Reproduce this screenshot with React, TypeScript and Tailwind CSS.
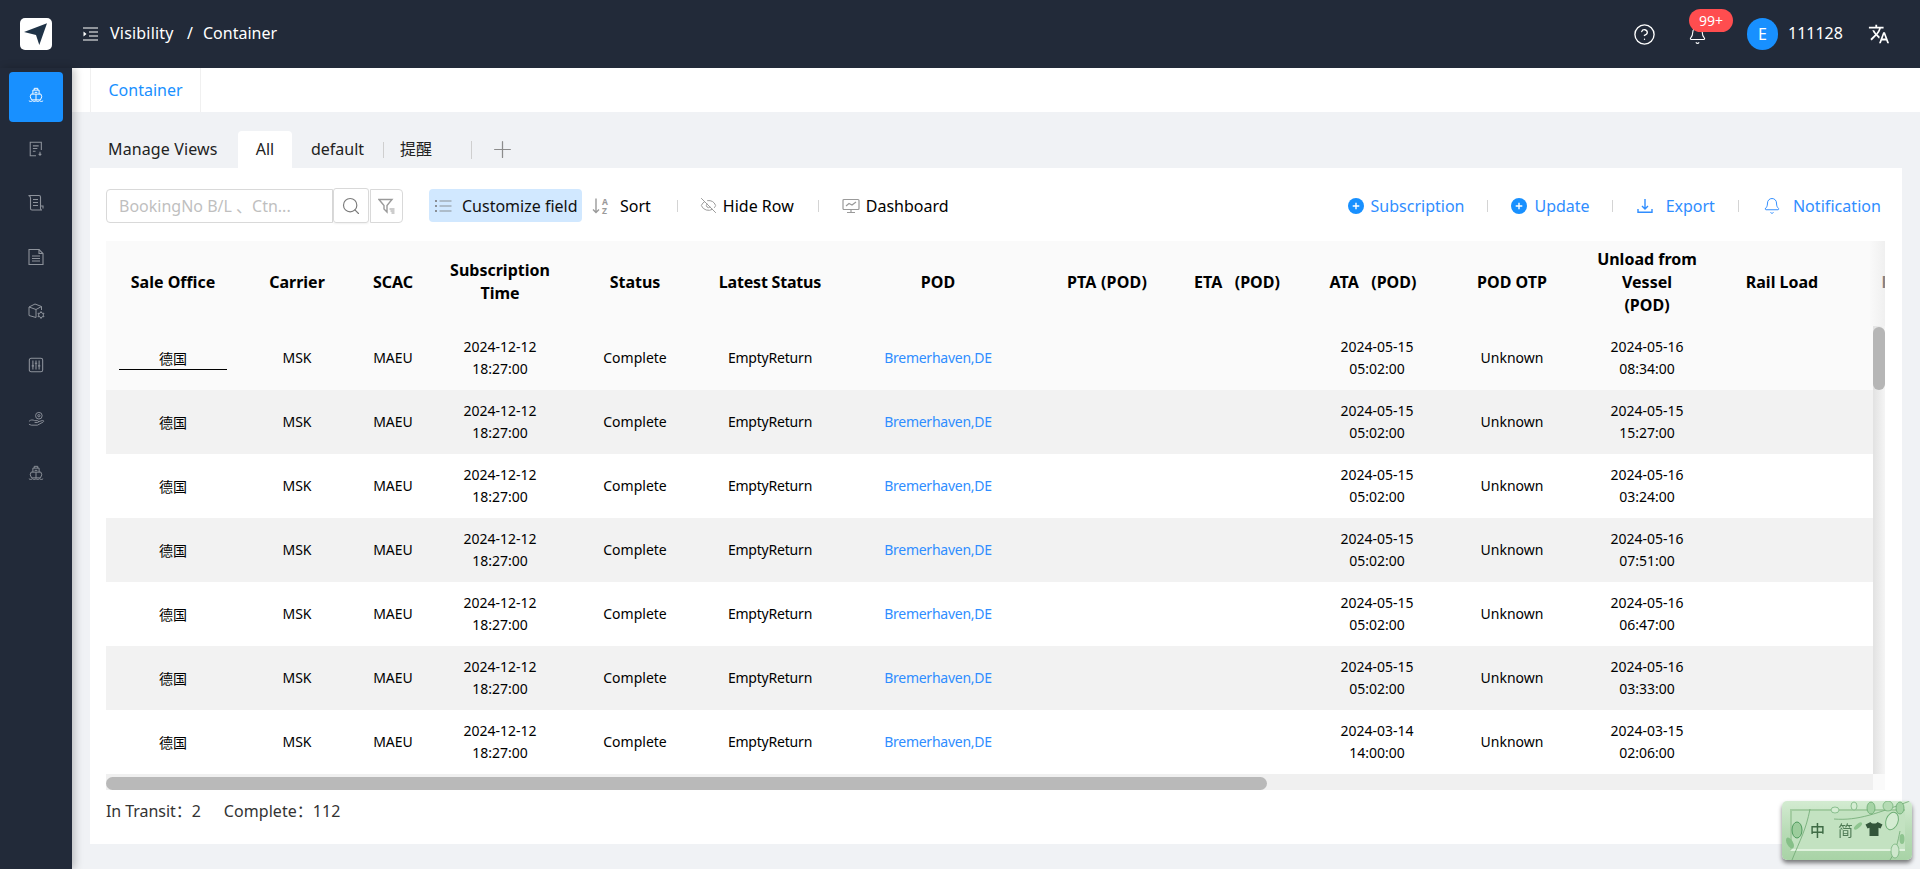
import { Bell, CircleHelp, EyeOff, Plus, Search } from "lucide-react";
import { MdTranslate } from "react-icons/md";
import type { ReactNode } from "react";

const columns = [
  { label: ["Sale Office"], w: "w-[134px]" },
  { label: ["Carrier"], w: "w-[114px]" },
  { label: ["SCAC"], w: "w-[78px]" },
  { label: ["Subscription", "Time"], w: "w-[136px]" },
  { label: ["Status"], w: "w-[134px]" },
  { label: ["Latest Status"], w: "w-[136px] tracking-[-0.2px]" },
  { label: ["POD"], w: "w-[200px]" },
  { label: ["PTA (POD)"], w: "w-[138px] tracking-[0.2px]" },
  { label: ["ETA\u00a0\u00a0 (POD)"], w: "w-[122px]" },
  { label: ["ATA\u00a0\u00a0 (POD)"], w: "w-[158px] pr-[8px]" },
  { label: ["POD OTP"], w: "w-[112px]" },
  { label: ["Unload from", "Vessel", "(POD)"], w: "w-[158px]" },
  { label: ["Rail Load"], w: "w-[112px]" },
  { label: ["Rail Unload"], w: "w-[178px]" },
];

const rows = [
  { ata: ["2024-05-15", "05:02:00"], unload: ["2024-05-16", "08:34:00"], bg: "bg-[#fafafa]" },
  { ata: ["2024-05-15", "05:02:00"], unload: ["2024-05-15", "15:27:00"], bg: "bg-[#f2f2f2]" },
  { ata: ["2024-05-15", "05:02:00"], unload: ["2024-05-16", "03:24:00"], bg: "bg-white" },
  { ata: ["2024-05-15", "05:02:00"], unload: ["2024-05-16", "07:51:00"], bg: "bg-[#f2f2f2]" },
  { ata: ["2024-05-15", "05:02:00"], unload: ["2024-05-16", "06:47:00"], bg: "bg-white" },
  { ata: ["2024-05-15", "05:02:00"], unload: ["2024-05-16", "03:33:00"], bg: "bg-[#f2f2f2]" },
  { ata: ["2024-03-14", "14:00:00"], unload: ["2024-03-15", "02:06:00"], bg: "bg-white" },
];

function Ship({ className }: { className?: string }) {
  return (
    <svg viewBox="0 0 18 18" fill="none" stroke="currentColor" strokeWidth="1.1" className={className}>
      <path d="M7 3.5V1.5h4v2" />
      <path d="M5.5 8V3.5h7V8" />
      <path d="M7.5 6h3" />
      <path d="M2.5 11l1-3h11l1 3-1.5 3.5h-10z" />
      <path d="M9 8v6.5" />
      <path d="M1 15.5c1.3 1 2.7 1 4 0 1.3 1 2.7 1 4 0 1.3 1 2.7 1 4 0 1.3 1 2.7 1 4 0" />
    </svg>
  );
}

function SideIcon({ index }: { index: number }) {
  const cls = "w-[16px] h-[16px]";
  const common = { viewBox: "0 0 18 18", fill: "none", stroke: "currentColor", strokeWidth: 1.2, className: cls };
  if (index === 1)
    return (
      <svg {...common}>
        <path d="M9 16.500H2.500V1.500H15V10" />
        <path d="M5.500 5.500h6.500M5.500 8.500h5M5.500 11.500h3" />
        <path d="M13.500 12v3.500M12 14.500l1.500 1.500 1.500-1.500" />
      </svg>
    );
  if (index === 2)
    return (
      <svg viewBox="0 0 18 18" fill="none" stroke="currentColor" strokeWidth="1.1" className="w-[18px] h-[18px]">
        <path d="M1.500 1.500h10.500a1.500 1.500 0 0 1 1.500 1.500v11.500a1.500 1.500 0 0 0 1.500 1.500H5a1.500 1.500 0 0 1-1.500-1.500V4A2.500 2.500 0 0 0 1.500 1.500z" />
        <path d="M6 5.500h5M6 8.500h5M6 11.500h5" />
        <path d="M13.500 12h2.500v2.500" />
      </svg>
    );
  if (index === 3)
    return (
      <svg viewBox="0 0 18 18" fill="none" stroke="currentColor" strokeWidth="1.1" className="w-[18px] h-[18px]">
        <path d="M2 1.500h10l4 4v11H2z" />
        <path d="M12 1.500v4h4" />
        <path d="M5 8h8M5 10.500h8M5 13h8" />
      </svg>
    );
  if (index === 4)
    return (
      <svg viewBox="0 0 18 18" fill="none" stroke="currentColor" strokeWidth="1" className="w-[18px] h-[18px]">
        <path d="M9 15.500l-7-2V5l6-3 6.500 2.500V8" />
        <path d="M2 5l7 2.500 5.500-3M9 7.500v8" />
        <path d="M14 9.500l1 1.800h2l-1 1.700 1 1.700h-2l-1 1.800-1-1.800h-2l1-1.700-1-1.700h2z" />
      </svg>
    );
  if (index === 5)
    return (
      <svg {...common}>
        <rect x="1.500" y="1.500" width="15" height="15" rx="2" />
        <path d="M5.500 4v10M9 4v10M12.500 4v10" />
        <path d="M4.200 10h2.600M7.700 7h2.600M11.200 10h2.600" />
      </svg>
    );
  if (index === 6)
    return (
      <svg viewBox="0 0 18 18" fill="none" stroke="currentColor" strokeWidth="1" className="w-[17px] h-[17px]">
        <circle cx="11.500" cy="5" r="3.500" />
        <circle cx="11.500" cy="5" r="1.200" />
        <path d="M1 11c2-2 4-1.800 6-.8h3c1.500 0 1.500 2 0 2H7" />
        <path d="M10.500 11.500l5-1.500c1.200-.2 1.500 1 .6 1.600L10 15H3.500L1 14" />
      </svg>
    );
  return <Ship className={cls} />;
}

function Plain({ children }: { children: ReactNode }) {
  return (
    <svg viewBox="0 0 18 18" fill="none" stroke="currentColor" strokeWidth="1.200" className="w-[18px] h-[18px]">
      {children}
    </svg>
  );
}

function PlusDot() {
  return (
    <svg viewBox="0 0 16 16" className="w-4 h-4">
      <circle cx="8" cy="8" r="8" fill="#1890ff" />
      <path d="M8 4.700v6.600M4.700 8h6.600" stroke="#fff" strokeWidth="1.400" />
    </svg>
  );
}

function Sep({ className }: { className: string }) {
  return <span className={"w-px h-[12px] bg-[#d4d4d4] " + className} />;
}

function Widget() {
  return (
    <div className="fixed left-[1782px] top-[801px] w-[130px] h-[59px] rounded-[5px] bg-gradient-to-b from-[#d3ebd1] via-[#b9dcb7] to-[#a8d3a6] shadow-[0_3px_4px_rgba(0,0,0,0.5)] overflow-hidden">
      <div className="absolute left-[8px] top-[8px] right-[7px] bottom-[9px] bg-[#c3e2c1] border-t-2 border-l-2 border-t-[#a3cca1] border-l-[#a3cca1] border-b-2 border-b-[#e0f2de]" />
      <svg viewBox="0 0 130 59" fill="none" className="absolute left-0 top-0 w-[130px] h-[59px]">
        <path d="M10 59c8-20 14-30 18-51M52 18c24 2 44-6 76-18M118 30c-2 10-4 20-10 29" stroke="#6ea872" strokeWidth="0.8" />
        <ellipse cx="15" cy="29" rx="5" ry="8" fill="#9ccd9c" stroke="#4f9b5e" />
        <ellipse cx="110" cy="20" rx="6" ry="9" transform="rotate(20 110 20)" fill="#d4ecd2" stroke="#6fae76" />
        <ellipse cx="89" cy="7" rx="4" ry="6" fill="#a5d3a5" stroke="#5ea467" strokeWidth="0.7" />
        <ellipse cx="106" cy="5" rx="5" ry="5" fill="#b5dbb4" stroke="#6fae76" strokeWidth="0.7" />
        <ellipse cx="118" cy="7" rx="4" ry="6" fill="#a5d3a5" stroke="#5ea467" strokeWidth="0.7" />
        <ellipse cx="72" cy="5" rx="3" ry="4" fill="#d4ecd2" stroke="#6fae76" strokeWidth="0.7" />
        <ellipse cx="53" cy="9" rx="4" ry="3" fill="#d4ecd2" stroke="#6fae76" strokeWidth="0.7" />
        <ellipse cx="76" cy="25" rx="2" ry="5" transform="rotate(50 76 25)" fill="#8ec48f" />
        <ellipse cx="8" cy="42" rx="3" ry="6" transform="rotate(-30 8 42)" fill="#86c088" />
        <ellipse cx="113" cy="50" rx="4" ry="7" fill="#cfe8cd" stroke="#6fae76" strokeWidth="0.7" />
        <ellipse cx="120" cy="38" rx="2.500" ry="5" fill="#8ec48f" />
      </svg>
      <div className="relative h-full flex items-center pb-[3px]">
        <span className="ml-[28px] text-[15px] leading-none text-[#3f6b45] font-['Noto_Sans_CJK_SC',sans-serif] font-medium">中</span>
        <span className="ml-[13px] text-[15px] leading-none text-[#4f7a55] font-['Noto_Sans_CJK_SC',sans-serif]">简</span>
        <svg viewBox="0 0 18 16" className="ml-[12px] w-[18px] h-4" fill="#33553a">
          <path d="M5.500 1L0.500 3.500l2 4 2-.8V15h9V6.700l2 .8 2-4L12.500 1c-1 2-6 2-7 0z" />
        </svg>
      </div>
    </div>
  );
}

export default function App() {
  return (
    <div className="h-screen w-full overflow-hidden flex flex-col bg-[#f0f2f5] font-['Noto_Sans','Noto_Sans_CJK_SC',sans-serif] text-black">
      {/* top bar */}
      <header className="h-[68px] shrink-0 bg-[#222a39] text-white flex items-center text-[16px]">
        <div className="ml-[20px] w-[32px] h-[32px] bg-white rounded-[5px] flex items-center justify-center">
          <svg viewBox="0 0 32 32" className="w-[32px] h-[32px]">
            <path d="M27 5.300L4 14l12 3 3.300 10z" fill="#1f3347" />
          </svg>
        </div>
        <svg viewBox="0 0 15 14" className="ml-[31px] w-[15px] h-[14px]" fill="none" stroke="#fff" strokeWidth="1.200">
          <path d="M0 1h15M6 5h9M6 9h9M0 13h15" />
          <path d="M0.500 4.500l3 2.500-3 2.500z" fill="#fff" stroke="none" />
        </svg>
        <span className="ml-[12px] pb-[2px] w-[64px] tracking-[0.2px] whitespace-nowrap">Visibility</span>
        <span className="ml-[13px] pb-[2px]">/</span>
        <span className="ml-[10px] pb-[2px]">Container</span>
        <div className="flex-1" />
        <CircleHelp className="w-[23px] h-[23px] -mr-[2px]" strokeWidth={1.4} />
        <div className="relative ml-[37px] w-[13px] h-[18px] mt-[2px]">
          <Bell className="absolute left-[-3px] top-[-1px] w-[19px] h-[21px]" strokeWidth={1.4} />
          <span className="absolute left-[-2px] top-[-17px] w-[44px] h-[23px] rounded-full bg-[#ff4d4f] text-[14px] leading-[23px] text-center">99+</span>
        </div>
        <div className="ml-[43px] w-[31px] h-[32px] rounded-full bg-[#1890ff] flex items-center justify-center text-[16px]">E</div>
        <span className="ml-[10px] w-[55px] pb-[2px]">111128</span>
        <MdTranslate className="ml-[25px] w-[22px] h-[22px] mr-[30px]" />
      </header>

      <div className="flex flex-1 min-h-0">
        {/* side nav */}
        <aside className="w-[72px] shrink-0 bg-[#222a39] pt-[4px] flex flex-col items-center gap-[4px] relative z-10 shadow-[3px_0_8px_rgba(0,0,0,0.22)]">
          <div className="w-[54px] h-[50px] rounded-[4px] bg-[#1890ff] text-white flex items-center justify-center pb-1">
            <Ship className="w-[16px] h-[16px]" />
          </div>
          {[1, 2, 3, 4, 5, 6, 7].map((i) => (
            <div key={i} className="w-[54px] h-[50px] text-[#8d929b] flex items-center justify-center pb-1">
              <SideIcon index={i} />
            </div>
          ))}
        </aside>

        <main className="flex-1 min-w-0 flex flex-col">
          <div className="h-[44px] shrink-0 bg-white pl-[18px]">
            <div className="w-[111px] h-full border-x border-[#f0f0f0] flex items-center justify-center text-[16px] text-[#1890ff]">Container</div>
          </div>

          {/* saved views */}
          <div className="h-[37px] mt-[19px] ml-[18px] flex items-center text-[16px] text-[#222]">
            <span className="ml-[18px] w-[110px] whitespace-nowrap pb-[2px] tracking-[0.12px]">Manage Views</span>
            <div className="ml-[20px] w-[54px] h-[37px] bg-white rounded-t-[4px] flex items-center justify-center pb-[2px]">All</div>
            <span className="ml-[19px] w-[52px] pb-[2px]">default</span>
            <span className="ml-[20px] w-px h-[16px] bg-[#cfcfcf]" />
            <span className="ml-[16px] w-[32px] whitespace-nowrap pb-[3px] font-['Noto_Sans_CJK_SC',sans-serif]">提醒</span>
            <span className="ml-[39px] w-px h-[18px] bg-[#cfcfcf]" />
            <Plus className="ml-[17px] w-[27px] h-[27px] text-[#8c8c8c]" strokeWidth={1.1} />
          </div>

          <section className="ml-[18px] mr-[18px] h-[676px] bg-white pl-[16px] pr-[17px] pt-[21px]">
            {/* toolbar */}
            <div className="h-[35px] pb-[2px] flex items-center text-[16px]">
              <div className="w-[227px] h-[34px] border border-[#d9d9d9] rounded-l-[4px] pl-[12px] flex items-center text-[#bfbfbf] text-[16px] whitespace-nowrap">BookingNo B/L 、Ctn...</div>
              <div className="w-[36px] h-[35px] border border-[#d9d9d9] rounded-[3px] flex items-center justify-center text-[#7b7b7b] shadow-[0_1px_2px_rgba(0,0,0,0.06)]">
                <Search className="w-[20px] h-[20px]" strokeWidth={1.4} />
              </div>
              <div className="ml-px w-[33px] h-[34px] border border-[#d9d9d9] rounded-r-[4px] flex items-center justify-center text-[#9a9a9a]">
                <svg viewBox="0 0 18 18" className="w-[18px] h-[18px]" fill="none" stroke="currentColor" strokeWidth="1.400">
                  <path d="M1 2.500h13l-5 6v6.500l-3-3V8.500z" />
                  <path d="M11.500 12h5M12.500 14h4M13.500 16h3" strokeWidth="1" />
                </svg>
              </div>
              <div className="ml-[26px] w-[153px] h-[33px] rounded-[4px] bg-[#d1e8ff] flex items-center pl-[5px] text-[#111]">
                <span className="text-[#8a8f96]">
                  <Plain>
                    <path d="M5.500 4h12M5.500 9h12M5.500 14h12" />
                    <path d="M1 4h2M1 9h2M1 14h2" strokeWidth="2" />
                  </Plain>
                </span>
                <span className="ml-[10px] whitespace-nowrap">Customize field</span>
              </div>
              <span className="ml-[10px] text-[#9a9a9a] w-[17px]">
                <svg viewBox="0 0 17 18" className="w-[17px] h-[18px]" fill="none" stroke="currentColor" strokeWidth="1.400">
                  <path d="M4 1.500v14M1 12.500l3 3 3-3" />
                  <text x="10" y="7.500" fontSize="8.500" fontWeight="700" fill="currentColor" stroke="none">A</text>
                  <text x="10" y="16.500" fontSize="8.500" fontWeight="700" fill="currentColor" stroke="none">Z</text>
                </svg>
              </span>
              <span className="ml-[11px]">Sort</span>
              <Sep className="ml-[26px]" />
              <EyeOff className="ml-[22px] w-[17px] h-[17px] text-[#9a9a9a]" strokeWidth={1.4} />
              <span className="ml-[6px] whitespace-nowrap">Hide Row</span>
              <Sep className="ml-[24px]" />
              <span className="ml-[23px] text-[#9a9a9a]">
                <Plain>
                  <rect x="1" y="2.500" width="16" height="10" rx="1" />
                  <path d="M9 12.500v3M5 15.500h8M4 9l3-2.500 3 1.500 4-3" />
                </Plain>
              </span>
              <span className="ml-[6px]">Dashboard</span>

              <div className="flex-1" />
              <div className="flex items-center text-[#2f8dff] pr-[4px]">
                <PlusDot />
                <span className="ml-[7px]">Subscription</span>
                <Sep className="ml-[23px]" />
                <span className="ml-[23px]"><PlusDot /></span>
                <span className="ml-[7px]">Update</span>
                <Sep className="ml-[22px]" />
                <span className="ml-[24px]">
                  <svg viewBox="0 0 16 16" className="w-4 h-4" fill="none" stroke="currentColor" strokeWidth="1.400">
                    <path d="M8 1v9.500M5 8l3 3 3-3M1 11v3.300h14V11" />
                  </svg>
                </span>
                <span className="ml-[13px]">Export</span>
                <Sep className="ml-[23px]" />
                <Bell className="ml-[24px] w-[18px] h-[20px]" strokeWidth={1.3} />
                <span className="ml-[12px] tracking-[0.05px]">Notification</span>
              </div>
            </div>

            {/* data table */}
            <div className="relative mt-[17px] h-[549px] overflow-hidden">
              <table className="table-fixed w-[1910px] border-collapse">
                <thead>
                  <tr className="h-[85px] bg-[#fafafa]">
                    {columns.map((c, i) => (
                      <th key={i} className={c.w + " text-[16px] leading-[23px] font-bold text-center align-middle p-0 pb-[3px]"}>
                        {c.label.map((l) => (
                          <div key={l} className="whitespace-nowrap">{l}</div>
                        ))}
                      </th>
                    ))}
                  </tr>
                </thead>
                <tbody className="text-[14px] leading-[22px] text-center">
                  {rows.map((r, i) => (
                    <tr key={i} className={"h-[64px] " + r.bg}>
                      <td className="p-0">
                        <div className={"h-[22px] mx-auto font-['Noto_Sans_CJK_SC',sans-serif] " + (i === 0 ? "w-[108px] border-b border-black box-content" : "")}>德国</div>
                      </td>
                      <td className="p-0">MSK</td>
                      <td className="p-0">MAEU</td>
                      <td className="p-0"><div>2024-12-12</div><div>18:27:00</div></td>
                      <td className="p-0">Complete</td>
                      <td className="p-0 tracking-[-0.2px]">EmptyReturn</td>
                      <td className="p-0 text-[#2f8dff] tracking-[-0.25px]">Bremerhaven,DE</td>
                      <td className="p-0" />
                      <td className="p-0" />
                      <td className="p-0"><div>{r.ata[0]}</div><div>{r.ata[1]}</div></td>
                      <td className="p-0">Unknown</td>
                      <td className="p-0"><div>{r.unload[0]}</div><div>{r.unload[1]}</div></td>
                      <td className="p-0" />
                      <td className="p-0" />
                    </tr>
                  ))}
                </tbody>
              </table>

              {/* fixed-column shade and scrollbars */}
              <div className="absolute right-0 top-0 h-[85px] w-[16px] bg-gradient-to-r from-transparent to-[#e9e9e9]/60" />
              <div className="absolute right-0 top-[85px] h-[448px] w-[12px] bg-gradient-to-r from-[#e2e2e2] to-[#f5f5f5]">
                <div className="mt-px h-[63px] w-[12px] rounded-full bg-[#b6b6b6]" />
              </div>
              <div className="absolute left-0 bottom-0 right-[12px] h-[16px] bg-[#f0f0f0] pt-[3px]">
                <div className="w-[1161px] h-[13px] rounded-full bg-[#b9b9b9]" />
              </div>
              <div className="absolute right-0 bottom-0 h-[16px] w-[12px] bg-[#fafafa]" />
            </div>

            <div className="mt-[10px] flex text-[16px] leading-[22px] text-[#333]">
              <span className="tracking-[-0.05px]">In Transit：2</span>
              <span className="ml-[23px] tracking-[0.05px]">Complete：112</span>
            </div>
          </section>
        </main>
      </div>
      <Widget />
    </div>
  );
}
